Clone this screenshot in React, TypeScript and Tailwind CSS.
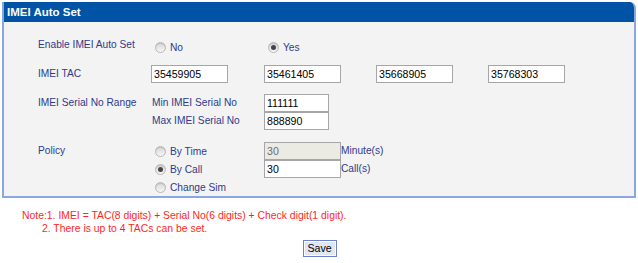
import { ReactNode } from 'react';

const Radio = ({ checked, label }: { checked?: boolean; label: string }) => (
  <span className="flex items-center h-[18px]">
    <span className="ml-[5px] mr-[4px] w-[11px] h-[11px] rounded-full border border-[#b8b8b8] bg-linear-to-b from-[#d8d8d8] to-[#f6f6f6] flex items-center justify-center shadow-[inset_0_1px_1px_rgba(0,0,0,0.12)]">
      {checked && <span className="w-[5px] h-[5px] rounded-full bg-[#454545]" />}
    </span>
    <span className="pt-[2px]">{label}</span>
  </span>
);

const Field = ({ value, w, disabled }: { value: string; w: string; disabled?: boolean }) => (
  <div
    className={`${w} h-[18px] border border-[#a6a6a6] pl-[2px] leading-[16px] text-[10.6px] ${
      disabled ? 'bg-[#ebebe4] text-[#6d6d6d]' : 'bg-white text-black'
    }`}
  >
    {value}
  </div>
);

const Label = ({ children }: { children: ReactNode }) => (
  <div className="w-[112px] shrink-0 leading-[18px]">{children}</div>
);

export default function App() {
  return (
    <div
      className="w-[638px] h-[263px] bg-white pt-[2px] text-[10.2px] text-[#2f3a8c]"
      style={{ fontFamily: '"Liberation Sans", Arial, sans-serif' }}
    >
      {/* Panel */}
      <div className="ml-[2px] w-[634px] border-x-2 border-b-2 border-[#8aa8df] rounded-tr-[6px] overflow-hidden bg-[#f3f3f3]">
        <div className="h-[20px] bg-[#0053a5] pl-[3px] leading-[20px] text-[11.5px] font-bold text-white">
          IMEI Auto Set
        </div>

        <div className="pl-[34px] pt-[14px]">
          {/* Enable */}
          <div className="flex h-[18px]">
            <Label>Enable IMEI Auto Set</Label>
            <div className="w-[114px] mt-[2px]">
              <Radio label="No" />
            </div>
            <div className="w-[112px] mt-[2px] -ml-[1px]">
              <Radio checked label="Yes" />
            </div>
          </div>

          {/* TAC */}
          <div className="flex mt-[11px]">
            <Label>IMEI TAC</Label>
            <div className="w-[114px] pl-[1px]">
              <Field value="35459905" w="w-[77px]" />
            </div>
            <div className="w-[112px]">
              <Field value="35461405" w="w-[77px]" />
            </div>
            <div className="w-[112px]">
              <Field value="35668905" w="w-[77px]" />
            </div>
            <div className="w-[112px]">
              <Field value="35768303" w="w-[77px]" />
            </div>
          </div>

          {/* Serial range */}
          <div className="flex mt-[11px]">
            <Label>IMEI Serial No Range</Label>
            <div className="flex flex-col">
              <div className="flex">
                <div className="w-[114px] pl-[2px] leading-[18px]">Min IMEI Serial No</div>
                <Field value="111111" w="w-[65px]" />
              </div>
              <div className="flex">
                <div className="w-[114px] pl-[2px] leading-[18px]">Max IMEI Serial No</div>
                <Field value="888890" w="w-[65px]" />
              </div>
            </div>
          </div>

          {/* Policy */}
          <div className="flex mt-[12px]">
            <Label>Policy</Label>
            <div className="flex flex-col">
              <div className="flex h-[18px]">
                <div className="w-[114px]">
                  <Radio label="By Time" />
                </div>
                <Field value="30" w="w-[77px]" disabled />
                <span className="leading-[18px]">Minute(s)</span>
              </div>
              <div className="flex h-[18px]">
                <div className="w-[114px]">
                  <Radio checked label="By Call" />
                </div>
                <Field value="30" w="w-[77px]" />
                <span className="leading-[18px]">Call(s)</span>
              </div>
              <div className="flex h-[18px]">
                <div className="w-[114px]">
                  <Radio label="Change Sim" />
                </div>
              </div>
            </div>
          </div>
        </div>
      </div>

      {/* Notes */}
      <div className="mt-[11px] text-[10.4px] leading-[13px] text-[#ff1f1f]">
        <div className="pl-[22px]">Note:1. IMEI = TAC(8 digits) + Serial No(6 digits) + Check digit(1 digit).</div>
        <div className="pl-[42px]">2. There is up to 4 TACs can be set.</div>
      </div>

      {/* Save */}
      <div className="flex justify-center mt-[5px]">
        <button className="ml-[1px] w-[34px] h-[17px] border border-[#6c82c8] bg-[#dfe6f6] text-[10.6px] leading-[15px] text-black shadow-[inset_0_0_0_1px_#ffffff]">
          Save
        </button>
      </div>
    </div>
  );
}
